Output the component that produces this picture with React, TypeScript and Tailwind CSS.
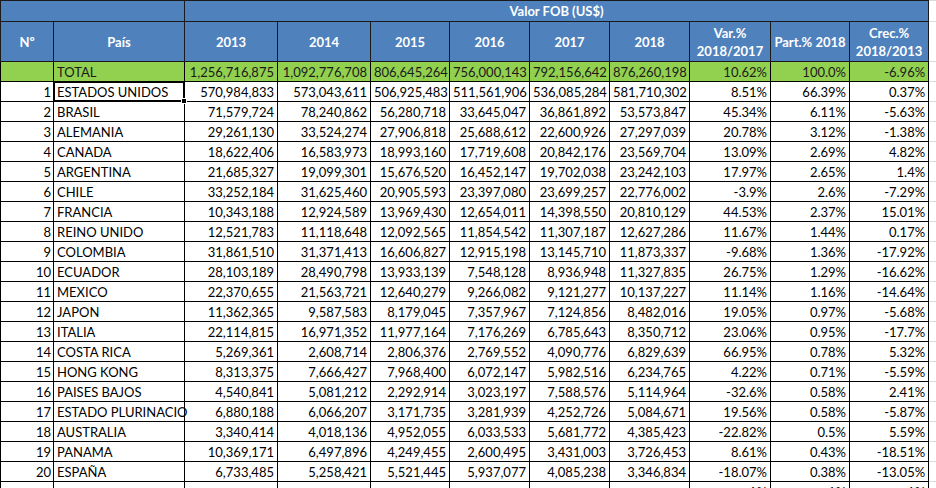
const years = ["2013", "2014", "2015", "2016", "2017", "2018"];

type Row = [string, string, string[], string, string, string];

const total: string[] = [
  "1,256,716,875",
  "1,092,776,708",
  "806,645,264",
  "756,000,143",
  "792,156,642",
  "876,260,198",
];

const rows: Row[] = [
  ["1", "ESTADOS UNIDOS", ["570,984,833", "573,043,611", "506,925,483", "511,561,906", "536,085,284", "581,710,302"], "8.51%", "66.39%", "0.37%"],
  ["2", "BRASIL", ["71,579,724", "78,240,862", "56,280,718", "33,645,047", "36,861,892", "53,573,847"], "45.34%", "6.11%", "-5.63%"],
  ["3", "ALEMANIA", ["29,261,130", "33,524,274", "27,906,818", "25,688,612", "22,600,926", "27,297,039"], "20.78%", "3.12%", "-1.38%"],
  ["4", "CANADA", ["18,622,406", "16,583,973", "18,993,160", "17,719,608", "20,842,176", "23,569,704"], "13.09%", "2.69%", "4.82%"],
  ["5", "ARGENTINA", ["21,685,327", "19,099,301", "15,676,520", "16,452,147", "19,702,038", "23,242,103"], "17.97%", "2.65%", "1.4%"],
  ["6", "CHILE", ["33,252,184", "31,625,460", "20,905,593", "23,397,080", "23,699,257", "22,776,002"], "-3.9%", "2.6%", "-7.29%"],
  ["7", "FRANCIA", ["10,343,188", "12,924,589", "13,969,430", "12,654,011", "14,398,550", "20,810,129"], "44.53%", "2.37%", "15.01%"],
  ["8", "REINO UNIDO", ["12,521,783", "11,118,648", "12,092,565", "11,854,542", "11,307,187", "12,627,286"], "11.67%", "1.44%", "0.17%"],
  ["9", "COLOMBIA", ["31,861,510", "31,371,413", "16,606,827", "12,915,198", "13,145,710", "11,873,337"], "-9.68%", "1.36%", "-17.92%"],
  ["10", "ECUADOR", ["28,103,189", "28,490,798", "13,933,139", "7,548,128", "8,936,948", "11,327,835"], "26.75%", "1.29%", "-16.62%"],
  ["11", "MEXICO", ["22,370,655", "21,563,721", "12,640,279", "9,266,082", "9,121,277", "10,137,227"], "11.14%", "1.16%", "-14.64%"],
  ["12", "JAPON", ["11,362,365", "9,587,583", "8,179,045", "7,357,967", "7,124,856", "8,482,016"], "19.05%", "0.97%", "-5.68%"],
  ["13", "ITALIA", ["22,114,815", "16,971,352", "11,977,164", "7,176,269", "6,785,643", "8,350,712"], "23.06%", "0.95%", "-17.7%"],
  ["14", "COSTA RICA", ["5,269,361", "2,608,714", "2,806,376", "2,769,552", "4,090,776", "6,829,639"], "66.95%", "0.78%", "5.32%"],
  ["15", "HONG KONG", ["8,313,375", "7,666,427", "7,968,400", "6,072,147", "5,982,516", "6,234,765"], "4.22%", "0.71%", "-5.59%"],
  ["16", "PAISES BAJOS", ["4,540,841", "5,081,212", "2,292,914", "3,023,197", "7,588,576", "5,114,964"], "-32.6%", "0.58%", "2.41%"],
  ["17", "ESTADO PLURINACIO", ["6,880,188", "6,066,207", "3,171,735", "3,281,939", "4,252,726", "5,084,671"], "19.56%", "0.58%", "-5.87%"],
  ["18", "AUSTRALIA", ["3,340,414", "4,018,136", "4,952,055", "6,033,533", "5,681,772", "4,385,423"], "-22.82%", "0.5%", "5.59%"],
  ["19", "PANAMA", ["10,369,171", "6,497,896", "4,249,455", "2,600,495", "3,431,003", "3,726,453"], "8.61%", "0.43%", "-18.51%"],
  ["20", "ESPAÑA", ["6,733,485", "5,258,421", "5,521,445", "5,937,077", "4,085,238", "3,346,834"], "-18.07%", "0.38%", "-13.05%"],
  ["", "", ["", "", "", "", "", ""], "1%", "1%", "1%"],
];

const widths = [53, 131, 93, 93, 79, 80, 80, 80, 81, 79, 79, 8];

const th = "border border-[#1a1a1a] bg-[#4f81bd] text-white font-bold text-center leading-[18px] p-0";
// data cell: fixed 20px row pitch like the sheet
const td = "border border-black h-[20px] py-0 px-[3px] leading-[18px] whitespace-nowrap overflow-hidden";

export default function App() {
  return (
    <div
      className="h-[488px] w-[936px] overflow-hidden bg-white text-[13px] text-black"
      style={{ fontFamily: "Lato, 'Liberation Sans', sans-serif" }}
    >
      <table className="table-fixed border-collapse w-[936px]">
        <colgroup>
          {widths.map((w, i) => (
            <col key={i} style={{ width: w }} />
          ))}
        </colgroup>
        <thead>
          <tr>
            <th colSpan={2} className={`${th} h-[21px]`}></th>
            <th colSpan={9} className={`${th} h-[21px]`}>
              Valor FOB (US$)
            </th>
            <td className="border border-[#dadada]"></td>
          </tr>
          <tr>
            <th className={`${th} h-[40px]`}>Nº</th>
            <th className={th}>País</th>
            {years.map((y) => (
              <th key={y} className={th}>
                {y}
              </th>
            ))}
            <th className={th}>
              Var.%
              <br />
              2018/2017
            </th>
            <th className={th}>Part.% 2018</th>
            <th className={th}>
              Crec.%
              <br />
              2018/2013
            </th>
            <td className="border border-[#dadada]"></td>
          </tr>
        </thead>
        <tbody>
          <tr className="bg-[#92d050] text-[#1b1b1b]">
            <td className={td}></td>
            <td className={`${td} text-left`}>TOTAL</td>
            {total.map((v, i) => (
              <td key={i} className={`${td} text-right`}>
                {v}
              </td>
            ))}
            <td className={`${td} text-right`}>10.62%</td>
            <td className={`${td} text-right`}>100.0%</td>
            <td className={`${td} text-right`}>-6.96%</td>
            <td className="border border-[#dadada] bg-white"></td>
          </tr>
          {rows.map(([n, pais, vals, v, p, c], r) => (
            <tr key={r}>
              <td className={`${td} text-right pr-[2px]`}>{n}</td>
              <td className={`${td} text-left relative overflow-visible`}>
                {pais}
                {r === 0 && (
                  <div className="absolute -inset-[1px] border-2 border-black pointer-events-none">
                    <div className="absolute -right-[4px] -bottom-[4px] w-[6px] h-[6px] bg-black border border-white" />
                  </div>
                )}
              </td>
              {vals.map((x, i) => (
                <td key={i} className={`${td} text-right`}>
                  {x}
                </td>
              ))}
              <td className={`${td} text-right`}>{v}</td>
              <td className={`${td} text-right`}>{p}</td>
              <td className={`${td} text-right`}>{c}</td>
              <td className="border border-[#dadada]"></td>
            </tr>
          ))}
        </tbody>
      </table>
    </div>
  );
}
